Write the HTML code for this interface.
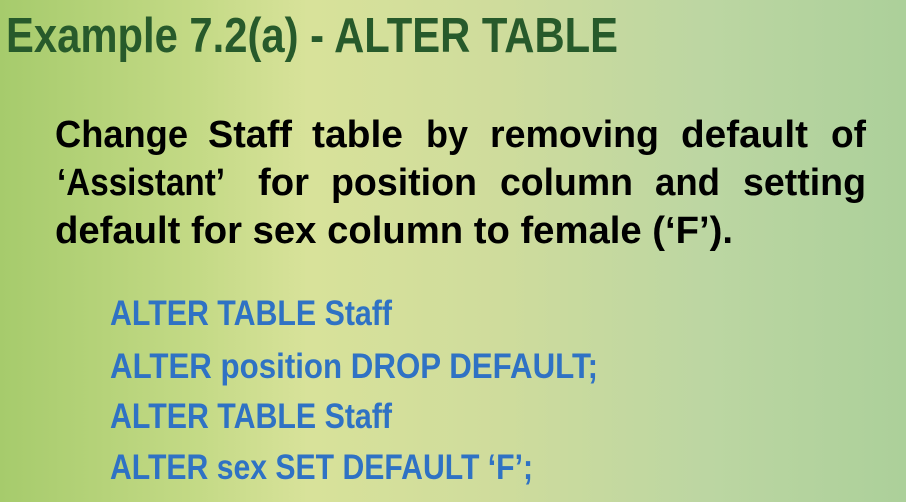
<!DOCTYPE html>
<html><head><meta charset="utf-8"><style>
html,body{margin:0;padding:0;width:906px;height:502px;overflow:hidden}
body{background:linear-gradient(90deg,#a6cb6c 0%,#c4da86 22%,#d8e29a 34%,#cfdc9c 55%,#bcd6a2 78%,#acd09a 100%)}
svg{display:block}
text{font-family:"Liberation Sans",sans-serif;font-weight:bold}
</style></head><body>
<svg width="906" height="502" viewBox="0 0 906 502">
<text x="6" y="52" font-size="49" fill="#275a2b" textLength="612" lengthAdjust="spacingAndGlyphs">Example 7.2(a) - ALTER TABLE</text>
<g font-size="38" fill="#000" lengthAdjust="spacingAndGlyphs">
<text x="55" y="147" textLength="133" lengthAdjust="spacingAndGlyphs">Change</text>
<text x="208" y="147" textLength="84" lengthAdjust="spacingAndGlyphs">Staff</text>
<text x="312" y="147" textLength="91" lengthAdjust="spacingAndGlyphs">table</text>
<text x="426" y="147" textLength="42" lengthAdjust="spacingAndGlyphs">by</text>
<text x="490" y="147" textLength="169" lengthAdjust="spacingAndGlyphs">removing</text>
<text x="681" y="147" textLength="127" lengthAdjust="spacingAndGlyphs">default</text>
<text x="831" y="147" textLength="35" lengthAdjust="spacingAndGlyphs">of</text>
<text x="57" y="195" textLength="168" lengthAdjust="spacingAndGlyphs">‘Assistant’</text>
<text x="258" y="195" textLength="51" lengthAdjust="spacingAndGlyphs">for</text>
<text x="331" y="195" textLength="146" lengthAdjust="spacingAndGlyphs">position</text>
<text x="500" y="195" textLength="133" lengthAdjust="spacingAndGlyphs">column</text>
<text x="655" y="195" textLength="65" lengthAdjust="spacingAndGlyphs">and</text>
<text x="743" y="195" textLength="123" lengthAdjust="spacingAndGlyphs">setting</text>
<text x="55" y="243" textLength="678" lengthAdjust="spacingAndGlyphs">default for sex column to female (‘F’).</text>
</g>
<g font-size="35" fill="#2f72c4">
<text x="110" y="325" textLength="282" lengthAdjust="spacingAndGlyphs">ALTER TABLE Staff</text>
<text x="110" y="378" textLength="488" lengthAdjust="spacingAndGlyphs">ALTER position DROP DEFAULT;</text>
<text x="110" y="428" textLength="282" lengthAdjust="spacingAndGlyphs">ALTER TABLE Staff</text>
<text x="110" y="479" textLength="423" lengthAdjust="spacingAndGlyphs">ALTER sex SET DEFAULT ‘F’;</text>
</g>
</svg>
</body></html>
